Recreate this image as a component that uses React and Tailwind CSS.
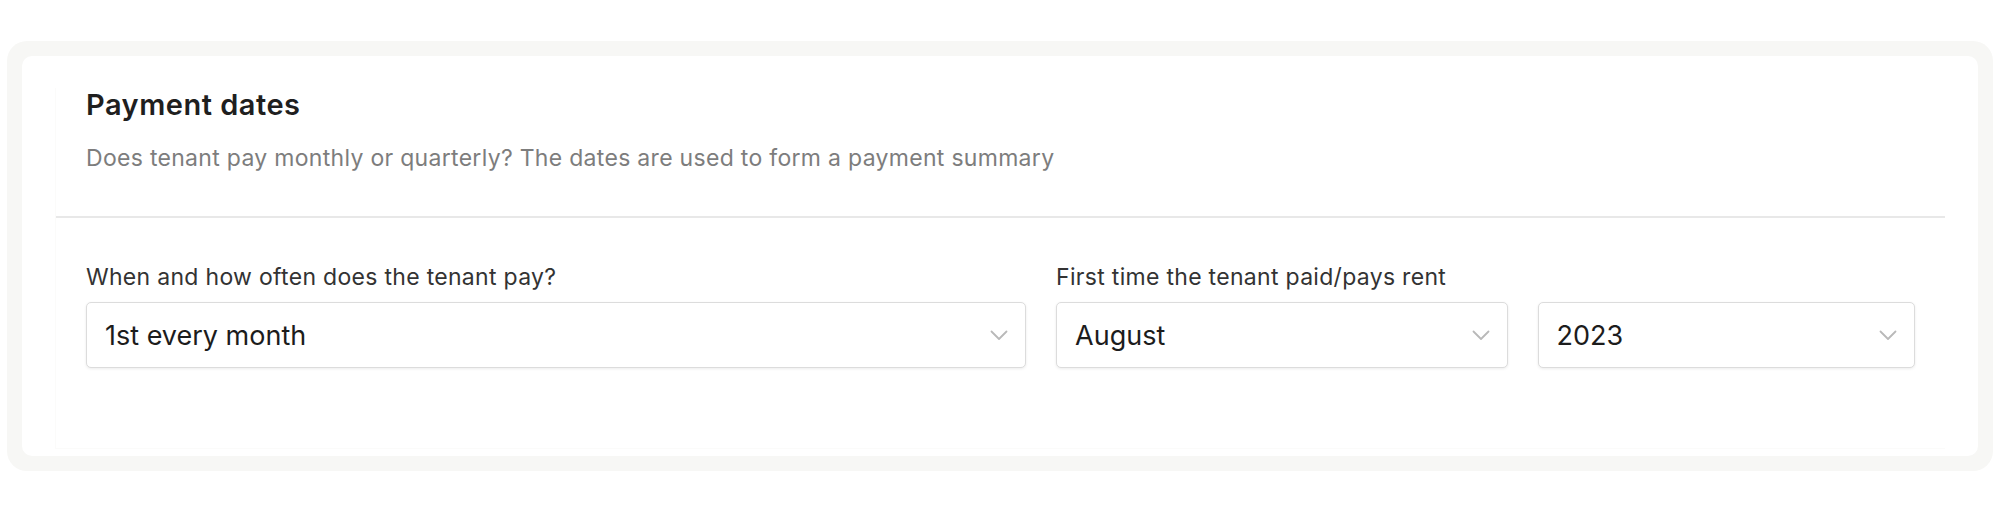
import React from "react";

const Chevron = () => (
  <svg width="18" height="11" viewBox="0 0 18 11" fill="none" className="shrink-0">
    <path d="M1.5 1.5 9 9l7.5-7.5" stroke="#b9b9b9" strokeWidth="1.8" strokeLinecap="round" strokeLinejoin="round" />
  </svg>
);

const SelectBox = ({ value }) => (
  <div className="flex h-[66px] items-center justify-between rounded-[5px] border border-[#dcdcdc] bg-white pl-[18px] pr-[17px] shadow-[0_1px_3px_rgba(0,0,0,0.08)]">
    <span className="text-[27px] leading-none text-[#1c1c1c]">{value}</span>
    <Chevron />
  </div>
);

export default function App() {
  return (
    <div className="min-h-[513px] bg-white pt-[41px] font-['Inter',sans-serif]">
      <div className="mx-[7px] rounded-[20px] bg-[#f7f7f5] p-[15px]">
        <div className="rounded-[10px] bg-white px-[33px] pb-[7px] pt-[32px]">
          <div className="border-b border-l border-[#fbfbfa]">
            <div className="px-[30px]">
              <h2 className="text-[29px] font-semibold leading-[34px] tracking-[0.5px] text-[#1f1f1f]">
                Payment dates
              </h2>
              <p className="mt-[21px] text-[23px] leading-[30px] tracking-[0.3px] text-[#7d7d7d]">
                Does tenant pay monthly or quarterly? The dates are used to form a payment summary
              </p>
            </div>
            <hr className="mt-[43px] border-t-2 border-[#e8e8e8]" />
            <div className="grid grid-cols-[939fr_451fr_377fr] gap-x-[30px] px-[30px] pb-[80px] pt-[44px]">
              <label className="col-span-1 text-[23px] leading-[30px] tracking-[0.3px] text-[#333333]">
                When and how often does the tenant pay?
              </label>
              <label className="col-span-2 text-[23px] leading-[30px] tracking-[0.3px] text-[#333333]">
                First time the tenant paid/pays rent
              </label>
              <div className="mt-[10px]">
                <SelectBox value="1st every month" />
              </div>
              <div className="mt-[10px]">
                <SelectBox value="August" />
              </div>
              <div className="mt-[10px]">
                <SelectBox value="2023" />
              </div>
            </div>
          </div>
        </div>
      </div>
    </div>
  );
}
